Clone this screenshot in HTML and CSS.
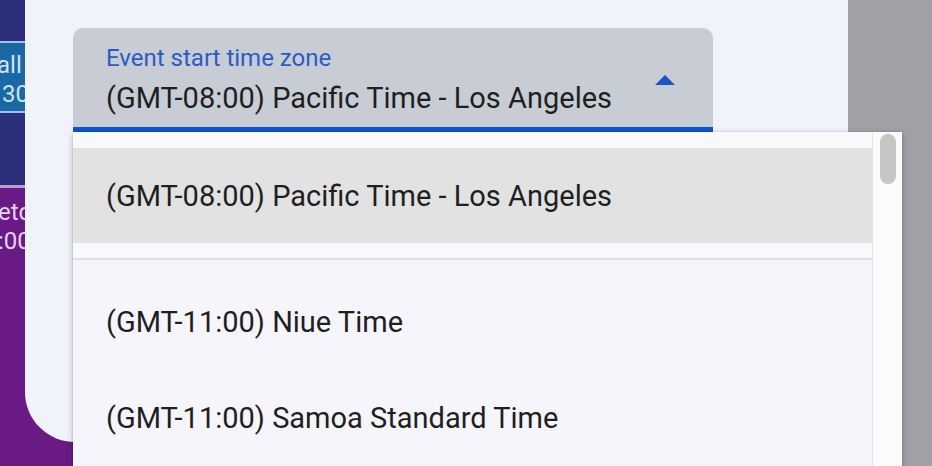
FILE: index.html
```html
<!DOCTYPE html>
<html lang="en">
<head>
<meta charset="utf-8">
<title>Event start time zone</title>
<link rel="stylesheet" href="styles.css">
</head>
<body>
<div class="screen">
  <div class="strip">
    <div class="blk navy-top"></div>
    <div class="blk event-teal">
      <span class="ev-line">all vi</span>
      <span class="ev-line ev-time">30</span>
    </div>
    <div class="blk navy-mid"></div>
    <div class="blk event-purple">
      <span class="ev-line">etc</span>
      <span class="ev-line">:00</span>
    </div>
  </div>
  <div class="dialog-col">
    <div class="dialog">
      <div class="field">
        <div class="field-label">Event start time zone</div>
        <div class="field-value">(GMT-08:00) Pacific Time - Los Angeles</div>
        <svg class="arrow" width="20" height="10" viewBox="0 0 20 10" aria-hidden="true"><path d="M0 10 L10 0 L20 10 Z" fill="#1a56c8"/></svg>
      </div>
    </div>
  </div>
  <div class="scrim"></div>

  <div class="menu">
    <div class="menu-list">
      <div class="menu-top">
        <div class="item selected">(GMT-08:00) Pacific Time - Los Angeles</div>
      </div>
      <div class="divider"></div>
      <div class="menu-rest">
        <div class="item">(GMT-11:00) Niue Time</div>
        <div class="item">(GMT-11:00) Samoa Standard Time</div>
      </div>
    </div>
    <div class="scroll-track"><div class="scroll-thumb"></div></div>
  </div>
</div>
</body>
</html>
```
FILE: styles.css
```css
* { box-sizing: border-box; }
html, body {
  margin: 0;
  padding: 0;
  width: 932px;
  height: 466px;
  overflow: hidden;
  font-family: Roboto, "Noto Sans", "Liberation Sans", sans-serif;
}
.screen {
  position: relative;
  display: flex;
  width: 932px;
  height: 466px;
  background: #9fa1a6;
}
.strip {
  width: 25px;
  display: flex;
  flex-direction: column;
  overflow: hidden;
  flex: none;
}
.blk { flex: none; overflow: hidden; white-space: nowrap; }
.navy-top { height: 41px; background: #2b2f7b; }
.event-teal {
  height: 72px;
  background: #1a69a6;
  border-top: 2px solid #9fc3e3;
  border-bottom: 2px solid #9fc3e3;
  display: flex;
  flex-direction: column;
  padding-top: 8px;
  color: #cfe3f5;
}
.navy-mid { height: 72px; background: #2b2f7b; }
.event-purple {
  flex: 1;
  background: #6a1a84;
  border-top: 3px solid #b79ccd;
  display: flex;
  flex-direction: column;
  padding-top: 10px;
  color: #e3d3ee;
}
.ev-line {
  font-size: 24px;
  line-height: 29px;
  margin-left: -3px;
}
.ev-line.ev-time { margin-left: 2px; }
.event-purple .ev-line { margin-left: -2px; }
.dialog-col {
  width: 823px;
  flex: none;
  background: linear-gradient(90deg, #6a1a84 0 48px, transparent 48px);
  height: 466px;
}
.dialog {
  height: 442px;
  background: #f0f3fa;
  border-bottom-left-radius: 50px;
  padding: 28px 0 0 48px;
}
.scrim { flex: 1; }
.field {
  position: relative;
  width: 640px;
  height: 104px;
  background: #c8ccd4;
  border-radius: 10px 10px 0 0;
  border-bottom: 5px solid #0b57d0;
  padding: 16px 0 0 33px;
}
.field-label {
  font-size: 24px;
  line-height: 28px;
  color: #2a5cc6;
}
.field-value {
  margin-top: 9px;
  font-size: 29px;
  line-height: 34px;
  color: #1f1f1f;
}
.arrow {
  position: absolute;
  right: 38px;
  top: 47px;
}
.menu {
  position: absolute;
  left: 73px;
  top: 132px;
  width: 829px;
  height: 340px;
  display: flex;
  background: #fbfbfc;
  box-shadow: 0 2px 6px rgba(0,0,0,0.25), 0 0 2px rgba(0,0,0,0.15);
}
.menu-list {
  width: 800px;
  display: flex;
  flex-direction: column;
  border-right: 1px solid #e6e6ea;
}
.menu-top {
  background: #f8f9fb;
  padding: 16px 0 15px;
}
.divider {
  height: 2px;
  background: #dcdfe5;
}
.menu-rest {
  flex: 1;
  background: #f5f5fb;
  padding-top: 14px;
}
.item {
  height: 96px;
  display: flex;
  align-items: center;
  padding-left: 33px;
  font-size: 29px;
  color: #1f1f1f;
}
.item.selected {
  height: 95px;
  background: #e2e2e3;
}
.scroll-track {
  flex: 1;
  background: #fbfbfb;
  padding: 2px 0 0 7px;
}
.scroll-thumb {
  width: 16px;
  height: 50px;
  border-radius: 8px;
  background: #c6c6c6;
}
```
